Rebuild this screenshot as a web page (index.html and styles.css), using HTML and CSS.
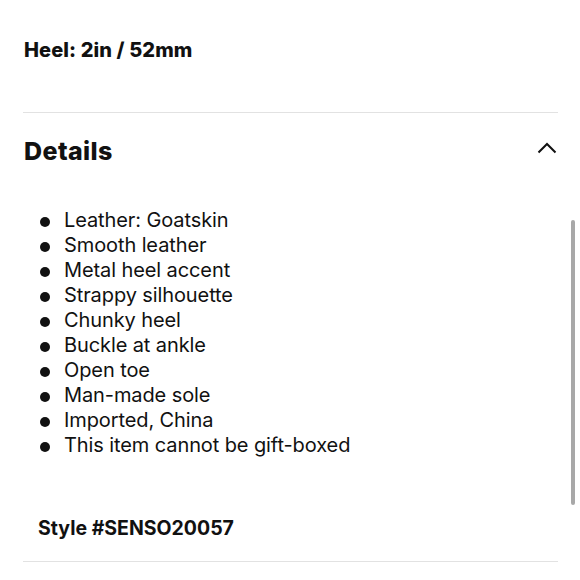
FILE: index.html
```html
<!DOCTYPE html>
<html lang="en">
<head>
<meta charset="utf-8">
<title>Details</title>
<link rel="stylesheet" href="styles.css">
</head>
<body>
<main class="page">
  <p class="spec">Heel: 2in / 52mm</p>
  <hr class="divider">
  <section class="accordion">
    <div class="acc-head">
      <h2 class="acc-title">Details</h2>
      <svg class="chevron" width="20" height="12" viewBox="0 0 20 12" aria-hidden="true">
        <path d="M1.5 10.5 L10 2 L18.5 10.5" fill="none" stroke="#111" stroke-width="2"/>
      </svg>
    </div>
    <ul class="features">
      <li>Leather: Goatskin</li>
      <li>Smooth leather</li>
      <li>Metal heel accent</li>
      <li>Strappy silhouette</li>
      <li>Chunky heel</li>
      <li>Buckle at ankle</li>
      <li>Open toe</li>
      <li>Man-made sole</li>
      <li>Imported, China</li>
      <li>This item cannot be gift-boxed</li>
    </ul>
    <p class="style-no">Style #SENSO20057</p>
  </section>
  <hr class="divider">
</main>
<div class="scrollbar"></div>
</body>
</html>
```

FILE: styles.css
```css
html, body {
  margin: 0;
  padding: 0;
  background: #ffffff;
}
body {
  font-family: Inter, "Liberation Sans", Arial, sans-serif;
  color: #111111;
  width: 580px;
  height: 580px;
  overflow: hidden;
}
.page {
  padding: 0 22px 0 23px;
}
.spec {
  margin: 0;
  padding-top: 38px;
  padding-left: 1px;
  font-size: 20px;
  line-height: 24px;
  font-weight: 800;
  letter-spacing: 0.1px;
}
.divider {
  margin: 0;
  border: 0;
  border-top: 1px solid #e2e2e2;
  height: 0;
}
.spec + .divider {
  margin-top: 50px;
}
.accordion {
  padding-top: 23px;
}
.acc-head {
  display: flex;
  align-items: center;
  justify-content: space-between;
  padding-left: 1px;
  padding-right: 1px;
}
.acc-title {
  margin: 0;
  font-size: 25px;
  line-height: 30px;
  font-weight: 800;
  letter-spacing: 0.4px;
}
.chevron {
  display: block;
  margin-top: -6px;
}
.features {
  list-style: none;
  margin: 42px 0 0 0;
  padding: 0 0 0 17px;
  font-size: 20px;
  line-height: 25px;
  letter-spacing: -0.1px;
}
.features li {
  display: flex;
  align-items: flex-start;
}
.features li::before {
  content: "";
  flex: none;
  width: 10px;
  height: 10px;
  border-radius: 50%;
  background: #111111;
  margin-top: 9px;
  margin-right: 14px;
}
.style-no {
  margin: 58px 0 0 0;
  padding-left: 15px;
  font-size: 19.5px;
  line-height: 24px;
  font-weight: 700;
  padding-bottom: 21px;
}
.scrollbar {
  position: absolute;
  left: 571px;
  top: 220px;
  width: 4px;
  height: 285px;
  border-radius: 3px;
  background: #a8a8a8;
}
```
